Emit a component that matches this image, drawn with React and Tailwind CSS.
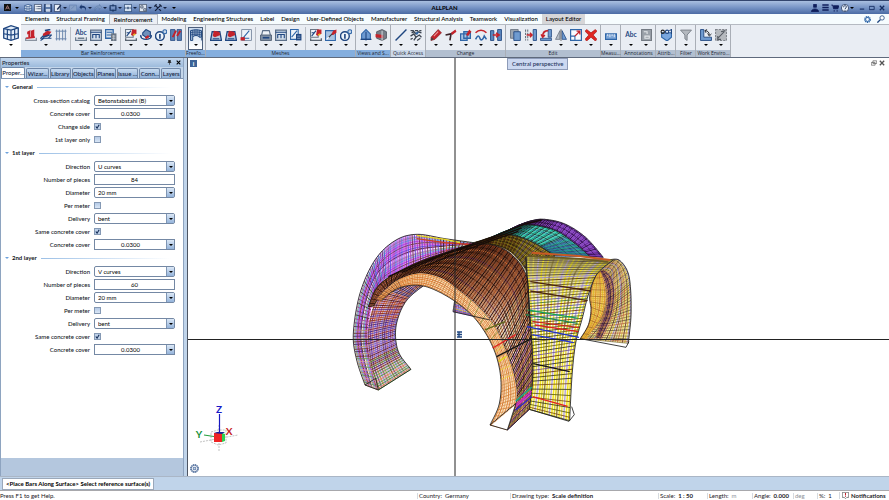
import React, { useState } from 'react';

const NAVY = '#1f4680';
const BLUE = '#2f66a8';
const RED = '#c4232b';

// Ribbon glyphs, all drawn on a 12 x 12 grid
const glyphs = {
  place: (
    <>
      <path d="M1 8.500v2.500h10V8.500" fill="none" stroke="#8a93a0" strokeWidth="1.400" />
      <path d="M2.500 3l3-1.500V8h-2V5l-1 .5zM6 2l3-1v7.500H6z" fill={RED} />
      <path d="M1.500 9l8-1" stroke={RED} strokeWidth="1.500" />
    </>
  ),
  sweep: (
    <>
      <path d="M1 9l3-3h7l-3 3zM1 11l3-2h7" fill="#dfe8f2" stroke={NAVY} />
      <path d="M3 5l4-3 4 1-3 4-4 1z" fill={RED} />
      <path d="M5 2l5-1M3 8l6-2" stroke={NAVY} strokeWidth="1.500" />
    </>
  ),
  bars: <path d="M2 1v10M4.500 1v10M7.500 1v10M10 1v10M1 2.500h10M1 9.500h10" stroke="#6b87ad" strokeWidth=".9" />,
  stamp: (
    <>
      <text x="6" y="6" textAnchor="middle" fontSize="6" fontWeight="700" fill={NAVY}>Abc</text>
      <path d="M1 8v3h10V8M3 9h6" fill="none" stroke="#6f7f92" strokeWidth="1.300" />
    </>
  ),
  sheet: (
    <>
      <path d="M1 1.500h10v9.500H1z" fill="#d4dfeb" stroke="#5c6f88" strokeWidth="1.300" />
      <path d="M1 3.500h10M3 9V5.500h6V9M6 5v4" fill="none" stroke={NAVY} />
    </>
  ),
  sheetCalc: (
    <>
      <path d="M1 1h7v8H1z" fill="#d4dfeb" stroke={BLUE} strokeWidth="1.200" />
      <path d="M2 3.500h5M2 6h5" stroke={BLUE} />
      <path d="M6 4.500h5v7H6z" fill="#6b7785" />
      <path d="M7 7h3M7 9h3M8.500 6v5" stroke="#d8dde4" strokeWidth=".6" />
    </>
  ),
  edit: (
    <>
      <path d="M1 1h7v7H1z" fill="#eef3f8" stroke="#6b7785" />
      <path d="M2 7l4-5M2 4h3" stroke={NAVY} />
      <path d="M7 1h4v4H9l-1 2-2-1z" fill={RED} />
      <path d="M8 6l2-1" stroke="#e8b422" strokeWidth="1.500" />
      <path d="M1 9v2h10V9" fill="none" stroke="#5c6672" strokeWidth="1.400" />
    </>
  ),
  rotate: (
    <>
      <path d="M3 4l3-3 4 2v4L6 8 3 6z" fill="#6f90bb" stroke={NAVY} />
      <path d="M1 7c1 4 9 4 10 0M2 9l-1-3M10 9l1-3" fill="none" stroke={NAVY} strokeWidth="1.200" />
      <path d="M5 8l3-2 1 2-3 2z" fill={RED} />
    </>
  ),
  info: (
    <>
      <circle cx="5" cy="7" r="4" fill="#eef4fa" stroke={NAVY} strokeWidth="1.300" />
      <path d="M5 5v4.500" stroke={NAVY} strokeWidth="1.500" />
      <circle cx="9.500" cy="3" r="1.800" fill="#c5d6ea" stroke={BLUE} />
    </>
  ),
  swap: (
    <>
      <path d="M1 1h4v10H1zM7 1h4v10H7z" fill="#5a7fb2" stroke={NAVY} strokeWidth=".7" />
      <path d="M3 8l3-6M7 7l3-5" stroke={RED} strokeWidth="1.800" />
    </>
  ),
  surface: (
    <>
      <path d="M1 2c3-1 7-1 10 0v6H9C8 6 4 6 3 8v3H1z" fill="#9db4d0" stroke={NAVY} strokeWidth=".9" />
      <path d="M1 4c3-1 7-1 10 0M1 6c3-1 7-1 10 0M3 1.500V8M5 1v5.500M7 1v5.500M9 1.500V8M11 8v3" fill="none" stroke={NAVY} strokeWidth=".7" />
    </>
  ),
  meshRed: (
    <>
      <path d="M2.500 3h7l1.500 8H1z" fill="#b9c9dc" stroke={NAVY} strokeWidth="1.200" />
      <path d="M3 7l1-5 5 1 1 3-5 2z" fill={RED} />
      <path d="M3 9.500h6" stroke={NAVY} />
    </>
  ),
  meshDraw: (
    <>
      <path d="M2 1h9v10H2z" fill="#eef3f8" stroke="#8291a5" strokeWidth=".9" />
      <path d="M3 9l6-7M2 9h7" stroke={BLUE} />
      <path d="M1 8h4v3H1z" fill={RED} />
    </>
  ),
  printer: (
    <>
      <path d="M2 6l1-4h6l1 4" fill="#eef3f8" stroke="#5c6f88" />
      <path d="M1 6h10v5H1z" fill="#8091a6" stroke="#4b5a6e" strokeWidth=".8" />
      <path d="M3 8.500h6" stroke="#1f4680" strokeWidth="1.500" />
    </>
  ),
  plan: (
    <>
      <path d="M1 1h7v9H1z" fill="#eef3f8" stroke={BLUE} />
      <path d="M2 8l5-6" stroke={BLUE} />
      <path d="M6 5h5v6H6z" fill={NAVY} />
      <path d="M7 7h3M7 9h3" stroke="#b8cbe3" strokeWidth=".6" />
    </>
  ),
  pick: (
    <>
      <path d="M1 2h9v9H1z" fill="#a9c3e2" stroke={BLUE} />
      <path d="M2 10l5-5" stroke="#fff" />
      <path d="M6 6l2-4 3-1v3L8 6z" fill={RED} />
      <path d="M4 8l3-3" stroke="#3a3f48" strokeWidth="1.200" />
    </>
  ),
  house: (
    <>
      <path d="M2 10V5l4-4 4 4v5z" fill="#6d9ad1" stroke={BLUE} />
      <path d="M6 3v8M1 10h10" stroke={NAVY} />
    </>
  ),
  section: (
    <>
      <path d="M2 3l5-2 4 2v6l-4 2-5-2z" fill="#777e88" stroke="#454b55" strokeWidth=".7" />
      <path d="M1 5l7 1v3L1 8z" fill={RED} />
      <path d="M7 2v9" stroke="#cdd3da" />
    </>
  ),
  line: <path d="M1 11L11 1" stroke={NAVY} strokeWidth="1.300" />,
  hatch: (
    <>
      <path d="M1 2h3M5 2h3M9 2h2M2 4l2-1 2 2 2-2 3 1" fill="none" stroke="#3c4450" strokeWidth="1.300" />
      <path d="M1 7l3-2 2 3-2 3M6 8l3-2 2 2M7 11l3-2M1 10l2-1" fill="none" stroke="#3c4450" strokeWidth="1.200" />
      <path d="M5 4l2 2 2-3z" fill={BLUE} />
    </>
  ),
  pencil: (
    <>
      <path d="M1.500 8L8 1l3 3-6 6-3.500 1z" fill={RED} stroke="#7c1a1f" strokeWidth=".6" />
      <path d="M4 7l4-4" stroke="#e99a9c" />
      <path d="M1 11l1-3 2 2z" fill="#444" />
    </>
  ),
  trim: (
    <>
      <path d="M1 6l5-1 2-1M6 5l-1 6" fill="none" stroke="#3c2328" strokeWidth="1.500" />
      <path d="M6 4l4-3 1 2-4 3z" fill={RED} />
    </>
  ),
  copyTo: (
    <>
      <path d="M1 5h6v6H1zM4 3h6v6H4z" fill="#a9c3e2" stroke={BLUE} strokeWidth="1.200" />
      <path d="M6 6l3-5 2 2-3 4z" fill={RED} />
    </>
  ),
  curve: (
    <>
      <path d="M1 4c3-3 7-3 10 0" stroke={RED} strokeWidth="1.400" fill="none" />
      <path d="M1 10c2-4 3-4 4-1s3 1 4-2l2 3" fill="none" stroke={BLUE} strokeWidth="1.400" />
    </>
  ),
  join: (
    <>
      <path d="M1 2h3v9H1zM7.500 1H11v10H7.500z" fill="#5a88bf" stroke={NAVY} strokeWidth=".8" />
      <path d="M3 6h6M6 4l3 2-3 2" fill="none" stroke={RED} strokeWidth="1.300" />
    </>
  ),
  copy: (
    <>
      <path d="M1 1h7v8H1z" fill="#9ba5b1" stroke="#69737f" strokeWidth=".8" />
      <path d="M4 3h6v8H4z" fill="#6f9bd0" stroke={NAVY} strokeWidth=".8" />
    </>
  ),
  move: (
    <>
      <path d="M1 1v10M3 1v10" stroke="#69737f" strokeDasharray="2 1" />
      <path d="M8 1h3v10H8z" fill="#6f9bd0" stroke={NAVY} strokeWidth=".8" />
      <path d="M2 6h5M5 4l2 2-2 2" fill="none" stroke={RED} strokeWidth="1.300" />
    </>
  ),
  turn: (
    <>
      <path d="M1 9h10v2H1zM8 1h3v7H8z" fill="#6f9bd0" stroke={NAVY} strokeWidth=".7" />
      <path d="M3 7c0-3 2-5 5-5M1.500 5.500L3 8l2-2" fill="none" stroke={RED} strokeWidth="1.400" />
    </>
  ),
  mirror: (
    <>
      <path d="M5 2v8H1z" fill="#b6bdc6" stroke="#69737f" strokeWidth=".7" />
      <path d="M7 2v8h4z" fill="#6f9bd0" stroke={NAVY} strokeWidth=".7" />
      <path d="M6 0v12" stroke="#333" strokeWidth=".6" />
    </>
  ),
  scale: (
    <>
      <path d="M1 1h10v10H1z" fill="#f8fbfe" stroke={BLUE} strokeWidth="1.200" />
      <path d="M1 7h4v4" fill="none" stroke={BLUE} />
      <path d="M5 7l4-4M6.500 2.500h3v3" fill="none" stroke={RED} strokeWidth="1.200" />
    </>
  ),
  remove: <path d="M2 1l4 3 4-3 1.500 1.500L8 6l3.500 4-1.500 1.500L6 8l-4 3.500L.5 10 4 6 .5 2.500z" fill="#e02622" stroke="#a31613" strokeWidth=".6" />,
  ruler: (
    <>
      <path d="M1 5h10v5H1z" fill="#7da5d6" stroke={BLUE} />
      <path d="M3 5v2M5 5v3M7 5v2M9 5v3" stroke="#fff" strokeWidth=".7" />
    </>
  ),
  abc: <text x="6" y="8" textAnchor="middle" fontSize="6" fontWeight="700" fill={NAVY}>Abc</text>,
  note: (
    <>
      <path d="M2 1h9v10H2z" fill="#9aa1a9" stroke="#737a83" />
      <path d="M4 3h3v2M5 7h4v2H5z" fill="none" stroke="#e4e7ea" />
    </>
  ),
  tag: (
    <>
      <path d="M2 4h9v4l-4 3.500L2 8z" fill="#7aa7de" stroke={BLUE} />
      <circle cx="3" cy="3" r="1.500" fill="none" stroke="#222" />
      <circle cx="7" cy="3" r="1.500" fill="#e6eef8" stroke={NAVY} />
      <path d="M9 2l2-1v4" fill="none" stroke={NAVY} />
    </>
  ),
  filter: <path d="M1 1.500h10L7 6v5L5 9.500V6z" fill="#b4b9bf" stroke="#7c838c" strokeWidth=".9" />,
  corner: (
    <>
      <path d="M1 1h3v7h7v3H1z" fill="#6f9bd0" stroke={NAVY} strokeWidth=".8" />
      <path d="M5 2c3 0 4 2 4 4M7.500 4.500L9 7l2-2M7 1L5 2l1 2" fill="none" stroke="#2b2f36" strokeWidth=".9" />
    </>
  ),
  region: (
    <>
      <path d="M1 1h10v10H1z" fill="#b5b9be" stroke="#81868d" strokeDasharray="2 1" />
      <path d="M3 9l6-6M6 3l4-1M3 7v3h3" fill="none" stroke="#555b63" />
    </>
  ),
  cube: (
    <>
      <path d="M1 3l5-2 5 1.500v7L6 11 1 9.500z" fill="#e4eef9" stroke={NAVY} strokeWidth=".9" />
      <path d="M1 3l5 1 5-1.500M6 4v7M3.500 3.500v7M8.500 3v7M1 6.500l5 1 5-1" fill="none" stroke={NAVY} strokeWidth=".8" />
    </>
  ),
  gear: (
    <>
      <circle cx="6" cy="6" r="4.500" fill="none" stroke={BLUE} strokeWidth="2" strokeDasharray="2 1" />
      <circle cx="6" cy="6" r="3" fill="none" stroke={BLUE} strokeWidth="1.600" />
    </>
  ),
  gearThin: (
    <>
      <circle cx="6" cy="6" r="5" fill="none" stroke={NAVY} strokeDasharray="1.600 1" />
      <circle cx="6" cy="6" r="4" fill="#fff" stroke={NAVY} strokeWidth=".9" />
      <path d="M4.500 4.500h3v3h-3z" fill="#c3d3e8" stroke={NAVY} strokeWidth=".7" />
    </>
  ),
  search: (
    <>
      <circle cx="7.500" cy="4.500" r="3" fill="#fff" stroke={NAVY} strokeWidth="1.100" />
      <path d="M5 7l-4 4" stroke={NAVY} strokeWidth="1.800" />
    </>
  ),
  list: <path d="M1 1h10v10H1zM3 4h1M5 4h5M3 7h1M5 7h5" fill="#e9eef5" stroke="#283a5c" />,
  save: (
    <>
      <path d="M1 1h10v10H1z" fill="#3d5f96" stroke="#1c2f55" />
      <path d="M3 1h6v4H3zM3 7h6v4H3z" fill="#c9d6e8" />
    </>
  ),
  file: (
    <>
      <path d="M1 1h8v10H1z" fill="#e8eef6" stroke="#1c2f55" />
      <path d="M5 8l5-6" stroke="#1c2f55" strokeWidth="2" />
    </>
  ),
  tools: <path d="M2 2l8 8M10 2l-8 8M1 4l3-3M8 1l3 3" stroke="#15213d" strokeWidth="1.800" />,
  faded: <path d="M1 2h10v8H1zM3 8l5-5" fill="#87a0c6" stroke="#6684b3" />,
  undo: <path d="M4 1L1 5l3 3V6c4-1 5 0 6 4 1-5-1-7-6-7z" fill="#1c3a70" />,
  redo: <path d="M8 1l3 4-3 3V6C4 5 3 6 2 10 1 5 3 3 8 3z" fill="#7f9ac4" stroke="#54719f" strokeWidth=".6" />,
  frame: <path d="M2 3h8v6H2zM1 6h2M9 6h2M6 1v3M6 8v3" fill="none" stroke="#14305f" strokeWidth="1.400" />,
  fit: <path d="M1 1h10v10H1zM1 6h3M8 6h3M5 5h2v2H5z" fill="#d5e2f2" stroke="#183663" />,
  windows: <path d="M1 1h10v10H1zM3 3h3v3H3zM7 7h3v3H7z" fill="#dde5ee" stroke="#35445e" />,
  user: <path d="M4 1h4v4H4zM1 11c0-5 10-5 10 0z" fill="#101f5c" stroke="#101f5c" />,
  server: <path d="M1 2h10M1 6h10M1 10h10" stroke="#101f5c" strokeWidth="2.400" />,
  cart: <path d="M1 2h2l1 5h6l1-4H4M4 10h2M8 10h2" fill="#101f5c" stroke="#101f5c" strokeWidth="1.300" />,
  help: (
    <>
      <circle cx="6" cy="6" r="5" fill="#e8f0fa" stroke="#1c2f55" />
      <path d="M4 5c0-3 4-2.500 4-.5C8 6 6 6 6 7.500M6 8.500V10" fill="none" stroke="#1c2f55" strokeWidth="1.200" />
    </>
  ),
  min: <path d="M2 8h8" stroke="#142c60" strokeWidth="2" />,
  restore: <path d="M1 3h9v6H1z" fill="none" stroke="#142c60" strokeWidth="1.600" />,
  close: <path d="M2 2l8 8M10 2l-8 8" stroke="currentColor" strokeWidth="2.400" />,
  cascade: <path d="M4 2h7v5H4zM1 5h7v5H1z" fill="#fff" stroke="#555" strokeWidth="1.200" />,
  pin: <path d="M4 1h4v5H4zM2 6h8M6 6v5" fill="#222" stroke="#222" strokeWidth="1.400" />,
  logo: (
    <>
      <path d="M0 0h12v12H0z" fill="#111" />
      <path d="M3 9l3-6 3 6M4 7h4" fill="none" stroke="#d9a0a0" />
    </>
  ),
  alert: (
    <>
      <path d="M1 1h10v8H8l-2 2-2-2H1z" fill="#fff" stroke="#444" />
      <path d="M6 2v4M6 7v1.500" stroke={RED} strokeWidth="1.600" />
    </>
  ),
};

function Icon({ name, className = 'size-3' }) {
  return (
    <svg viewBox="0.500 0.500 11 11" className={`${className} shrink-0`} fill="none" aria-hidden="true">
      {glyphs[name]}
    </svg>
  );
}

function Caret({ className = 'text-black' }) {
  return (
    <svg viewBox="0 0 4 2" className={`h-[2px] w-1 shrink-0 ${className}`} aria-hidden="true">
      <path d="M0 0h4L2 2z" fill="currentColor" />
    </svg>
  );
}

const quickTools = [
  { name: 'cube', label: 'Project' },
  { name: 'list', label: 'Open on a project-specific basis' },
  { name: 'save', label: 'Save' },
  { name: 'file', label: 'Document', menu: true },
  { name: 'faded', label: 'Compare' },
  { name: 'undo', label: 'Undo', menu: true },
  { name: 'redo', label: 'Redo', menu: true },
  { name: 'frame', label: 'Refresh', menu: true },
  { name: 'fit', label: 'Zoom all', menu: true },
  { name: 'windows', label: 'Windows', menu: true },
  { name: 'tools', label: 'Options', menu: true },
];

function TitleBar() {
  return (
    <header className="flex h-[14px] items-center border-t border-[#33466e] bg-linear-to-b from-[#a9bfe0] via-[#7895c6] to-[#4a6ba4] px-[2px]">
      <div className="flex flex-1 items-center">
        <button aria-label="Allplan menu" className="flex w-[21px] items-center gap-1 pl-[2px]">
          <Icon name="logo" className="size-[7px]" />
          <Caret />
        </button>
        {quickTools.map(tool => (
          <button key={tool.name} aria-label={tool.label} className="flex items-center">
            <span className="flex w-[10px] justify-center">
              <Icon name={tool.name} className="size-2" />
            </span>
            {tool.menu && <Caret className="mr-px text-[#14213f]" />}
          </button>
        ))}
        <button aria-label="Customize" className="ml-1"><Caret /></button>
      </div>
      <h1 className="text-[6px] font-bold text-black">ALLPLAN</h1>
      <div className="flex flex-1 items-center justify-end text-[#142c60]">
        <button aria-label="Account" className="flex w-[10px] justify-center"><Icon name="user" className="size-2" /></button>
        <button aria-label="Services" className="flex w-[10px] justify-center"><Icon name="server" className="size-[7px]" /></button>
        <button aria-label="Shop" className="flex w-[10px] justify-center"><Icon name="cart" className="size-2" /></button>
        <button aria-label="Help" className="flex items-center gap-px px-px">
          <Icon name="help" className="size-2" />
          <Caret />
        </button>
        <button aria-label="Minimize" className="ml-[2px] flex w-[10px] justify-center"><Icon name="min" className="size-[6px]" /></button>
        <button aria-label="Restore" className="flex w-[10px] justify-center"><Icon name="restore" className="size-[6px]" /></button>
        <button aria-label="Close" className="flex w-[10px] justify-center"><Icon name="close" className="size-[6px]" /></button>
      </div>
    </header>
  );
}

const menuTabs = [
  'Elements', 'Structural Framing', 'Reinforcement', 'Modeling', 'Engineering Structures', 'Label', 'Design',
  'User-Defined Objects', 'Manufacturer', 'Structural Analysis', 'Teamwork', 'Visualization', 'Layout Editor',
];

function MenuTabs() {
  const [active, setActive] = useState('Reinforcement');

  const tabStyle = tab => {
    if (tab === active) return 'border-x border-t border-[#b5bac2] bg-[#eceff4] px-1';
    if (tab === 'Layout Editor') return 'bg-[#d6d6d8] px-1';
    return 'px-[3px]';
  };

  return (
    <nav className="flex h-[10px] items-stretch gap-px bg-[#f6fcfe] pl-px">
      {menuTabs.map(tab => (
        <button
          key={tab}
          onClick={() => setActive(tab)}
          className={`text-[6px] leading-[10px] font-medium whitespace-nowrap text-black ${tabStyle(tab)}`}
        >
          {tab}
        </button>
      ))}
      <div className="ml-auto flex items-center gap-[6px] pr-1">
        <button aria-label="Settings"><Icon name="gear" className="size-[7px]" /></button>
        <button aria-label="Find"><Icon name="search" className="size-2" /></button>
      </div>
    </nav>
  );
}

const blueCaption = 'bg-[#84aede]';
const greyCaption = 'bg-[#b2bfd0]';

const ribbonGroups = [
  { title: 'Bar Reinforcement', caption: blueCaption, sets: [['place', 'sweep', 'bars'], ['stamp', 'sheet', 'sheetCalc'], ['edit', 'rotate', 'info', 'swap']] },
  { title: 'Freefo...', caption: blueCaption, sets: [['surface']] },
  { title: 'Meshes', caption: blueCaption, sets: [['meshRed', 'meshRed', 'meshDraw'], ['printer', 'sheet', 'plan'], ['edit', 'pick', 'info']] },
  { title: 'Views and S...', caption: blueCaption, sets: [['house', 'section']] },
  { title: 'Quick Access', caption: 'bg-[#ccd9ea]', sets: [['line', 'hatch']] },
  { title: 'Change', caption: greyCaption, sets: [['pencil', 'trim', 'copyTo', 'curve', 'join']] },
  { title: 'Edit', caption: greyCaption, sets: [['copy', 'move', 'turn', 'mirror', 'scale', 'remove']] },
  { title: 'Measu...', caption: greyCaption, sets: [['ruler']] },
  { title: 'Annotations', caption: greyCaption, sets: [['abc', 'note']] },
  { title: 'Attrib...', caption: greyCaption, sets: [['tag']] },
  { title: 'Filter', caption: greyCaption, sets: [['filter']] },
  { title: 'Work Enviro...', caption: greyCaption, sets: [['corner', 'region']] },
];

const noMenu = ['place', 'bars', 'swap'];

function RibbonGroup({ title, caption, sets }) {
  return (
    <section className="flex flex-col border-r border-[#a9aeb6]">
      <div className="flex flex-1 items-stretch px-[2px] pt-[2px]">
        {sets.map((icons, i) => (
          <div key={i} className={`flex ${i > 0 ? 'ml-[2px] border-l border-[#b9bec6] pl-[2px]' : ''}`}>
            {icons.map((name, j) => (
              <button
                key={j}
                aria-label={name}
                className={`flex w-[15px] flex-col items-center gap-[3px] ${name === 'surface' ? 'border border-[#4c5f7c] bg-linear-to-b from-[#c9d9ec] to-white pt-px' : 'pt-[2px]'}`}
              >
                <Icon name={name} />
                {!noMenu.includes(name) && <Caret />}
              </button>
            ))}
          </div>
        ))}
      </div>
      <h2 className={`h-[7px] text-center font-['Open_Sans',sans-serif] text-[5px] leading-[7px] font-medium whitespace-nowrap text-[#1d2530] ${caption}`}>
        {title}
      </h2>
    </section>
  );
}

function Ribbon() {
  return (
    <div className="flex border-b border-[#5f6a7c] bg-[#e9edf3]">
      <button aria-label="Actionbar role" className="flex w-[21px] flex-col items-center justify-center gap-[3px] bg-white">
        <Icon name="cube" className="size-4" />
        <Caret />
      </button>
      <div className="flex min-w-0 flex-1 flex-col">
        <MenuTabs />
        <div className="flex h-[33px] border-t border-[#b5bac2]">
          {ribbonGroups.map(group => <RibbonGroup key={group.title} {...group} />)}
        </div>
      </div>
    </div>
  );
}

const paletteTabs = ['Proper...', 'Wizar...', 'Library', 'Objects', 'Planes', 'Issue ...', 'Conn...', 'Layers'];

const layerFields = (direction, pieces) => [
  { label: 'Direction', type: 'select', value: direction },
  { label: 'Number of pieces', type: 'text', value: pieces },
  { label: 'Diameter', type: 'select', value: '20 mm' },
  { label: 'Per meter', type: 'checkbox', value: false },
  { label: 'Delivery', type: 'select', value: 'bent' },
  { label: 'Same concrete cover', type: 'checkbox', value: true },
  { label: 'Concrete cover', type: 'combo', value: '0.0300' },
];

const sections = [
  {
    title: 'General',
    fields: [
      { label: 'Cross-section catalog', type: 'select', value: 'Betonstabstahl (B)' },
      { label: 'Concrete cover', type: 'combo', value: '0.0300' },
      { label: 'Change side', type: 'checkbox', value: true },
      { label: '1st layer only', type: 'checkbox', value: false },
    ],
  },
  { title: '1st layer', fields: layerFields('U curves', '84') },
  { title: '2nd layer', fields: layerFields('V curves', '60') },
];

const arrowBox = 'flex w-2 shrink-0 items-center justify-center border-l border-[#7f96b4] bg-linear-to-b from-[#dce8f6] to-[#94b3da]';

function Control({ id, type, value }) {
  const box = 'flex h-[11px] min-w-0 flex-1 border border-[#7488a4] bg-white';

  if (type === 'checkbox') {
    return (
      <input
        id={id}
        type="checkbox"
        defaultChecked={value}
        className="size-[7px] appearance-none border border-[#8599b4] bg-linear-to-b from-[#b5cae6] to-[#d9e6f5] bg-center checked:bg-[url('data:image/svg+xml,%3Csvg%20xmlns=%22http://www.w3.org/2000/svg%22%20viewBox=%220%200%206%206%22%3E%3Cpath%20d=%22M0%200h6v6H0z%22%20fill=%22%23bdd0e8%22/%3E%3Cpath%20d=%22M1%203l1.500%202L5%201%22%20fill=%22none%22%20stroke=%22%23122a55%22%20stroke-width=%221.300%22/%3E%3C/svg%3E')]"
      />
    );
  }
  if (type === 'text') {
    return (
      <div className={box}>
        <input id={id} defaultValue={value} className="w-full min-w-0 text-center text-[6px] leading-[9px]" />
      </div>
    );
  }
  if (type === 'combo') {
    return (
      <div className={box}>
        <input id={id} defaultValue={value} className="w-full min-w-0 flex-1 text-center text-[6px] leading-[9px]" />
        <button aria-label="Show values" className={arrowBox}><Caret /></button>
      </div>
    );
  }
  return (
    <div className={`${box} rounded-[2px]`}>
      <select id={id} className="min-w-0 flex-1 appearance-none pl-[3px] text-[6px] leading-[9px]">
        <option>{value}</option>
      </select>
      <span className={arrowBox}><Caret /></span>
    </div>
  );
}

function PropertiesPanel() {
  return (
    <aside className="flex w-[184px] shrink-0 flex-col border-x border-[#8ea4c0] bg-[#b4c7de]">
      <div className="flex h-[9px] items-center bg-linear-to-b from-[#c3d7ee] to-[#9dbbdc] pr-[2px] pl-px">
        <h2 className="flex-1 text-[6px] font-medium text-[#1c2635]">Properties</h2>
        <button aria-label="Pin"><Icon name="pin" className="size-[5px]" /></button>
        <button aria-label="Close palette" className="ml-1"><Icon name="close" className="size-[5px]" /></button>
      </div>
      <div className="flex h-3 items-end gap-px border-b border-[#7f95b2] bg-[#c4d6ea]">
        {paletteTabs.map((tab, i) => (
          <button
            key={tab}
            className={`flex-auto rounded-t-[2px] border border-b-0 border-[#6f87a8] text-[6px] font-medium whitespace-nowrap text-[#14233c] ${i === 0 ? 'h-[11px] bg-white' : 'h-[10px] bg-linear-to-b from-[#c6daf0] to-[#8fb0d8]'}`}
          >
            {tab}
          </button>
        ))}
        <span className="w-px" />
      </div>
      <form className="mb-[18px] flex-1 bg-white pt-px">
        {sections.map(section => (
          <fieldset key={section.title} className="min-w-0">
            <legend className="flex h-[14px] w-full items-center gap-1 px-1 text-[6px] font-bold text-[#101418]">
              <Caret className="text-[#6ea2dc]" />
              <span className="-ml-px">{section.title}</span>
              <span className="mr-2 h-px flex-1 bg-linear-to-r from-[#9cc0e6] to-white" />
            </legend>
            {section.fields.map(field => {
              const id = `${section.title}-${field.label}`.replace(/\s/g, '-');
              return (
                <div key={id} className="flex h-[13px] items-center gap-1 pr-2">
                  <label htmlFor={id} className="w-[89px] shrink-0 text-right text-[6px] font-medium text-[#15191f]">
                    {field.label}
                  </label>
                  <Control id={id} {...field} />
                </div>
              );
            })}
          </fieldset>
        ))}
      </form>
    </aside>
  );
}

// Catmull-Rom resampling of a point list into n + 1 points
const resample = (pts, n) => {
  const out = [];
  const last = pts.length - 1;
  for (let i = 0; i <= n; i++) {
    const t = (i / n) * last;
    const k = Math.min(Math.floor(t), last - 1);
    const u = t - k;
    const [p0, p1, p2, p3] = [pts[Math.max(k - 1, 0)], pts[k], pts[k + 1], pts[Math.min(k + 2, last)]];
    out.push([0, 1].map(d => 0.5 * (2 * p1[d] + (p2[d] - p0[d]) * u
      + (2 * p0[d] - 5 * p1[d] + 4 * p2[d] - p3[d]) * u * u
      + (3 * p1[d] - p0[d] - 3 * p2[d] + p3[d]) * u * u * u)));
  }
  return out;
};

const toPath = pts => 'M' + pts.map(p => p.map(v => v.toFixed(1)).join(' ')).join('L');

// A ruled surface between two edges: ribs run across it, rails run along it.
// ribZones holds one palette per stretch of the surface, cycled inside the stretch.
function Mesh({ a, b, ribs, rails, ribZones, railColors, fill = '#fff', width = 2.5, railWidth = 2.5, outer = true, inner = true }) {
  const ea = resample(a, ribs);
  const eb = resample(b, ribs);
  const rail = s => ea.map((p, i) => [p[0] + (eb[i][0] - p[0]) * s, p[1] + (eb[i][1] - p[1]) * s]);
  const ribColor = i => {
    const zone = ribZones[Math.floor((i / (ribs + 1)) * ribZones.length)];
    return zone[i % zone.length];
  };

  return (
    <g fill="none">
      <path d={`${toPath([...ea, ...[...eb].reverse()])}Z`} fill={fill} />
      {Array.from({ length: rails }, (_, k) => (
        <path key={`rail${k}`} d={toPath(rail((k + 0.5) / rails))} stroke={railColors[k % railColors.length]} strokeWidth={railWidth} />
      ))}
      {ea.map((p, i) => (
        <path key={`rib${i}`} d={toPath([p, eb[i]])} stroke={ribColor(i)} strokeWidth={width} />
      ))}
      {outer && <path d={toPath(ea)} stroke="#1a1a1a" strokeWidth="2.500" />}
      {inner && <path d={toPath(eb)} stroke="#1a1a1a" strokeWidth="2.500" />}
    </g>
  );
}

const surfaces = [
  // rear vault: purple rim, teal and olive courses
  {
    a: [[520, 46], [560, 32], [600, 28], [660, 42], [722, 82], [775, 142]],
    b: [[480, 65], [530, 47], [580, 48], [640, 66], [695, 105], [735, 140]],
    ribs: 64, rails: 5, ribZones: [['#1a0a20', '#3a1050'], ['#5a1a8c', '#2a0a40', '#8040b8']], railColors: ['#2b0a48', '#9050c8'], fill: '#8f50c4',
  },
  {
    a: [[470, 68], [530, 47], [580, 48], [640, 66], [695, 105], [735, 140]],
    b: [[420, 90], [480, 74], [530, 84], [575, 102], [605, 122], [630, 138]],
    ribs: 60, rails: 8, ribZones: [['#12201c', '#0b5a50'], ['#0b8f7c', '#20302c', '#3fd0b8'], ['#2a4f9c', '#0f8a78', '#203a60']], railColors: ['#15c0a0', '#1d1d1d', '#3a55b0'], fill: '#6ad0bc',
  },
  {
    a: [[340, 112], [400, 94], [460, 76], [510, 78], [565, 98], [630, 138]],
    b: [[380, 112], [410, 104], [450, 106], [490, 122], [520, 150], [548, 190]],
    ribs: 66, rails: 10, ribZones: [['#140a05', '#301808'], ['#1e1608', '#5a4a10', '#3a1a08'], ['#2a2810', '#6d5d10', '#3a2f60']], railColors: ['#b39a1c', '#201505', '#d0b81c', '#5c1f10'], fill: '#8a7428', inner: false,
  },
  // right vault, far leg
  {
    a: [[790, 150], [822, 150], [848, 185], [857, 240], [858, 320], [850, 400]],
    b: [[745, 186], [790, 192], [782, 240], [776, 300], [750, 345], [706, 386]],
    ribs: 44, rails: 20, width: 1.8,
    ribZones: [['#4a3a30', '#8a7a90', '#d0a060'], ['#3b2f1a', '#a04a28', '#6a5a20']],
    railColors: ['#8a86d8', '#d8c62a', '#5a3416', '#e0ca40', '#c86a34', '#b8a040', '#7a3040'], fill: '#f2e4b4',
  },
  {
    a: [[778, 182], [800, 205], [808, 250], [800, 310], [785, 350], [768, 385]],
    b: [[765, 184], [778, 220], [785, 265], [778, 310], [762, 350], [752, 380]],
    ribs: 36, rails: 5, width: 1.8, ribZones: [['#2a1020', '#5a2040', '#a06030']], railColors: ['#3a1a50', '#c08a40', '#20102a'], fill: '#b08078', outer: false, inner: false,
  },
  {
    a: [[765, 184], [778, 220], [783, 265], [772, 315], [750, 350], [722, 388]],
    b: [[757, 188], [742, 220], [734, 262], [738, 300], [730, 345], [706, 386]],
    ribs: 34, rails: 7, width: 1.8, ribZones: [['#d09a30', '#8a5a18', '#c8a428']], railColors: ['#e08a1c', '#e8c420', '#c8601c', '#d8b040'], fill: '#f4cc70', outer: false,
  },
  // right vault, near leg
  {
    a: [[543, 140], [545, 200], [552, 270], [556, 340], [562, 420], [563, 510], [552, 598]],
    b: [[805, 150], [756, 192], [730, 255], [712, 325], [692, 400], [681, 500], [674, 632]],
    ribs: 50, rails: 17, railWidth: 4.5,
    ribZones: [['#5a5028', '#7a7038', '#4a4038'], ['#5a4a20', '#8878c0', '#4a2a10', '#8a8040'], ['#3a6a30', '#6a3010', '#5a50a0'], ['#3a3a08', '#6a6010'], ['#5a2a0a', '#3c3808', '#2a2a20', '#6a4a90'], ['#5a5808', '#7a4a10', '#3a3a10']],
    railColors: ['#eee028', '#e8dc50', '#b8a8dc', '#f2e41c', '#e0d028', '#9a8a40'], fill: 'url(#legShade)',
  },
  // left vault, outer shell
  {
    a: [[400, 100], [300, 86], [215, 73], [150, 92], [90, 150], [45, 250], [25, 370], [35, 450], [60, 525]],
    b: [[380, 108], [300, 128], [220, 158], [150, 190], [105, 222], [82, 280], [68, 370], [78, 450], [100, 540]],
    ribs: 84, rails: 14,
    ribZones: [['#5a1410', '#c83820', '#30100c'], ['#a030b8', '#5a3cd0', '#702050'], ['#b838e0', '#5048e8', '#8a20b0'], ['#9a30c8', '#4060d0', '#602080'], ['#7a3080', '#3a2a28', '#9a4090'], ['#6a3020', '#502858', '#b08a68'], ['#b88a60', '#6a8a40', '#d8b090']],
    railColors: ['#ffffff', '#8ab07a', '#58c0d8', '#b838e0', '#6a3018', '#e050e8', '#5a48e0', '#3a1a10'], fill: '#dca8ec', inner: false,
  },
  // left leg, seen from inside
  {
    a: [[225, 190], [150, 205], [102, 250], [78, 310], [68, 370], [72, 430], [80, 480], [100, 540]],
    b: [[235, 228], [212, 245], [186, 270], [166, 305], [153, 350], [153, 395], [165, 435], [198, 478]],
    ribs: 62, rails: 14,
    ribZones: [['#2a1008', '#7a4030'], ['#1a1040', '#6a2010', '#30205a'], ['#982a10', '#b84a20', '#4a0a08'], ['#8a2010', '#5a2a80', '#b03a20'], ['#5a3cb8', '#7a1a40', '#3a1a80'], ['#6a40c0', '#4a1040', '#7a60d0'], ['#6a2a18', '#408020', '#4a2a60'], ['#3fa030', '#d88a50', '#50b040']],
    railColors: ['#7a3a18', '#5a1c80', '#d87040', '#8074e8', '#a02a60', '#c8804a', '#9a90f0'], fill: '#dcc4d0', outer: false,
  },
  // far foot seen through the arch
  {
    a: [[330, 215], [330, 260], [324, 305]],
    b: [[440, 270], [440, 300], [435, 330]],
    ribs: 22, rails: 20, ribZones: [['#5c4ac0', '#b04a70', '#8478d8', '#c8a030']], railColors: ['#9088e0', '#c84878', '#3c50b0', '#40a0a0'], fill: '#e4def2',
  },
  // main vault
  {
    a: [[70, 290], [105, 222], [200, 165], [300, 128], [385, 104], [450, 106], [505, 138], [545, 200], [552, 300], [560, 400], [563, 500], [553, 598]],
    b: [[85, 288], [120, 238], [165, 207], [225, 190], [290, 205], [340, 240], [400, 290], [450, 350], [485, 430], [508, 500], [514, 570], [487, 660]],
    ribs: 108, rails: 15, railWidth: 2.4, width: 3,
    ribZones: [['#3a1a10', '#6a4030'], ['#1a0c08', '#4a2a1c'], ['#140a06', '#402010'], ['#1c0b06', '#3c1a0c', '#0e0806'], ['#1c0b06', '#5a2210', '#2a0f08'], ['#3c1a0c', '#8a3a18', '#1a0a08'], ['#4a1a0c', '#9a4a24', '#2a1018'], ['#7a3c1c', '#1a0c08', '#6a5a30'], ['#3a140c', '#9a5a2c', '#1a1010', '#5a2a70'], ['#5a1c60', '#2a1a08', '#8a6a28'], ['#4a1a60', '#606a20', '#a0682c']],
    railColors: ['#8a3a16', '#2a0c06', '#e07a3a', '#3a1a0a', '#9a4a24', '#5a2a60', '#d89050'], fill: 'url(#vaultShade)',
  },
  // front rim
  {
    a: [[95, 268], [125, 236], [165, 207], [225, 190], [290, 205], [340, 240], [400, 290], [450, 350], [485, 430], [508, 500], [514, 570], [487, 660]],
    b: [[110, 272], [140, 246], [175, 230], [222, 226], [270, 240], [330, 274], [385, 320], [428, 380], [456, 445], [468, 515], [462, 585], [435, 645]],
    ribs: 84, rails: 7, width: 2,
    ribZones: [['#5a2c20', '#a85a28'], ['#c87024', '#e0782a'], ['#d07a3c', '#b86820'], ['#d88a50', '#6a7a20', '#e8a060'], ['#e0a070', '#c88a40', '#e8d030'], ['#c87024', '#d89050']],
    railColors: ['#e07820', '#e0a050', '#d06818'], fill: '#fbe0c0', outer: false,
  },
];

const accentBars = [
  ['#18a058', 'M548 300L700 325'],
  ['#208a50', 'M542 314L698 340'],
  ['#c82820', 'M562 334L702 353'],
  ['#d82020', 'M570 345L700 365'],
  ['#2030c8', 'M545 350L702 382'],
  ['#2434d0', 'M562 374L686 398'],
  ['#141414', 'M565 461L674 485'],
  ['#4a2410', 'M556 215L738 243'],
  ['#4a2410', 'M556 243L728 272'],
  ['#e02020', 'M563 560L668 589'],
  ['#e02020', 'M443 414L512 374'],
  ['#10b088', 'M512 574L560 532'],
  ['#c828c8', 'M512 584L560 544'],
  ['#d030d0', 'M512 590L558 552'],
  ['#3020c8', 'M512 600L560 560'],
  ['#606818', 'M420 360L480 335'],
  ['#141414', 'M455 440L560 385'],
  ['#e0d820', 'M462 455L482 440'],
];

function Viewport() {
  return (
    <main className="relative min-w-0 flex-1 border-l border-[#4d5563] bg-white">
      <svg viewBox="188 58 701 418" className="absolute inset-0 size-full" role="img" aria-label="Reinforced freeform vault">
        <defs>
          <linearGradient id="vaultShade" x1="0" y1="0" x2="0" y2="1">
            <stop offset="0" stopColor="#5a2e1c" />
            <stop offset=".25" stopColor="#a86c4c" />
            <stop offset=".45" stopColor="#ecd8c4" />
            <stop offset="1" stopColor="#f8ecdc" />
          </linearGradient>
          <linearGradient id="legShade" x1="0" y1="0" x2="0" y2="1">
            <stop offset="0" stopColor="#a89c60" />
            <stop offset=".15" stopColor="#e4dca0" />
            <stop offset=".35" stopColor="#fffef0" />
            <stop offset="1" stopColor="#fffce0" />
          </linearGradient>
        </defs>

        {/* the vault is modelled at three times the sheet scale */}
        <g transform="translate(345 210) scale(.3333)">
          {surfaces.map((surface, i) => <Mesh key={i} {...surface} />)}
          <path d="M440 645L487 660L511 585Z" fill="#fff" />
          <g fill="none" strokeWidth="4">
            {accentBars.map(([color, d]) => <path key={d} d={d} stroke={color} />)}
          </g>
          <path
            d="M60 525L100 540L198 478M60 525L92 505L100 540M435 645L487 660L553 598L672 634L688 614L680 590M435 645L513 580L487 660M706 386L843 412L852 395M324 305L435 330M543 140L556 340"
            fill="none"
            stroke="#1a1a1a"
            strokeWidth="2.500"
          />
          <path d="M215 76L300 88L345 98" stroke="#e8d820" strokeWidth="4" fill="none" />
          <path d="M215 86L300 98L375 104" stroke="#d04020" strokeWidth="4" fill="none" />
          <path d="M560 128L700 138L795 150" stroke="#c85a24" strokeWidth="6" fill="none" />
          <path d="M550 138L700 146L790 156" stroke="#6a5a24" strokeWidth="5" fill="none" />
          <path d="M130 200L220 160L340 116L440 82L540 42L590 30M170 188L300 132L420 94L530 54M240 168L340 128L440 92L520 64" stroke="#180c08" strokeWidth="4" fill="none" />
        </g>

        <path d="M455 58V476M188 339.500H889" stroke="#222" strokeWidth="1" />
        <path d="M457 332h5M457 337h5M459 332v5M457 334.500h5" stroke="#1f4680" strokeWidth="1.300" />

        {/* axis tripod */}
        <g fontSize="10" fontWeight="700" textAnchor="middle">
          <path d="M211 432l7-2h8v13l-8 2-7-3zM200 442l38-7M219 425v26" fill="none" stroke="#999" strokeWidth=".6" strokeDasharray="2 1" />
          <path d="M204 435l10 1.500" stroke="#25a040" strokeWidth="1.200" />
          <path d="M214 433h8v9h-8z" fill="#ef2424" />
          <path d="M222 433l3 1v7l-3 1z" fill="#2ed050" />
          <path d="M214 433l3-1h8l-3 2z" fill="#1c2090" />
          <path d="M219.500 414v19" stroke="#1818c0" strokeWidth="1.200" />
          <text x="219" y="413" fill="#1818c8">Z</text>
          <text x="199" y="438" fill="#149038">Y</text>
          <text x="229" y="435" fill="#c41818">X</text>
        </g>
      </svg>
      <button aria-label="Information" className="absolute top-[2px] left-[2px] size-[7px] bg-[#3c6397] text-[6px] leading-[7px] font-bold text-white">i</button>
      <div role="tooltip" className="absolute top-0 left-[319px] border border-[#8d9bb8] bg-[#ccd8f0] px-1 text-[6px] leading-[10px] font-medium whitespace-nowrap text-[#24355c]">
        Central perspective
      </div>
      <div className="absolute top-[2px] right-1 flex gap-[2px] text-[#555]">
        <button aria-label="Restore view"><Icon name="cascade" className="size-[6px]" /></button>
        <button aria-label="Close view"><Icon name="close" className="size-[6px]" /></button>
      </div>
      <button aria-label="View settings" className="absolute bottom-[3px] left-[2px]"><Icon name="gearThin" className="size-[9px]" /></button>
    </main>
  );
}

const statusItems = [
  { label: 'Country:', value: 'Germany', style: 'w-[93px]' },
  { label: 'Drawing type:', value: 'Scale definition', style: 'w-[148px]', bold: true },
  { label: 'Scale:', value: '1 : 50', style: 'w-[49px]', bold: true },
  { label: 'Length:', value: 'm', style: 'w-[45px]', dim: true },
  { label: 'Angle:', value: '0.000', style: 'w-[41px]', bold: true },
  { label: '', value: 'deg', style: 'w-6', dim: true },
  { label: '%:', value: '1', style: 'w-[22px]' },
];

function StatusBar() {
  return (
    <footer className="flex h-[10px] items-center border-t border-[#a8a8ac] bg-white text-[6px] text-[#1c2026]">
      <p className="flex-1">Press F1 to get Help.</p>
      {statusItems.map(({ label, value, style, bold, dim }) => (
        <p key={value} className={`flex gap-[3px] border-l border-[#d5dae0] pl-px whitespace-nowrap ${style}`}>
          {label && <span>{label}</span>}
          <span className={`${bold ? 'font-bold' : ''} ${dim ? 'text-[#8d9299]' : ''}`}>{value}</span>
        </p>
      ))}
      <button className="flex w-[50px] items-center gap-[2px] border-l border-[#d5dae0] pl-[2px] font-bold">
        <Icon name="alert" className="size-[7px]" />
        Notifications
      </button>
    </footer>
  );
}

function App() {
  return (
    <div className="flex h-screen flex-col overflow-hidden bg-[#c0d4ea] font-['Lato','Open_Sans',sans-serif] leading-none">
      <TitleBar />
      <Ribbon />
      <div className="flex min-h-0 flex-1 gap-[3px]">
        <PropertiesPanel />
        <Viewport />
      </div>
      <div className="flex h-[14px] items-center border-t border-[#aab6c6] bg-[#c0d4ea] pl-[2px]">
        <p className="border border-[#9aa8ba] bg-white px-[3px] text-[6px] leading-[10px] font-bold text-black">
          &lt;Place Bars Along Surface&gt; Select reference surface(s)
        </p>
      </div>
      <StatusBar />
    </div>
  );
}

export default App;
